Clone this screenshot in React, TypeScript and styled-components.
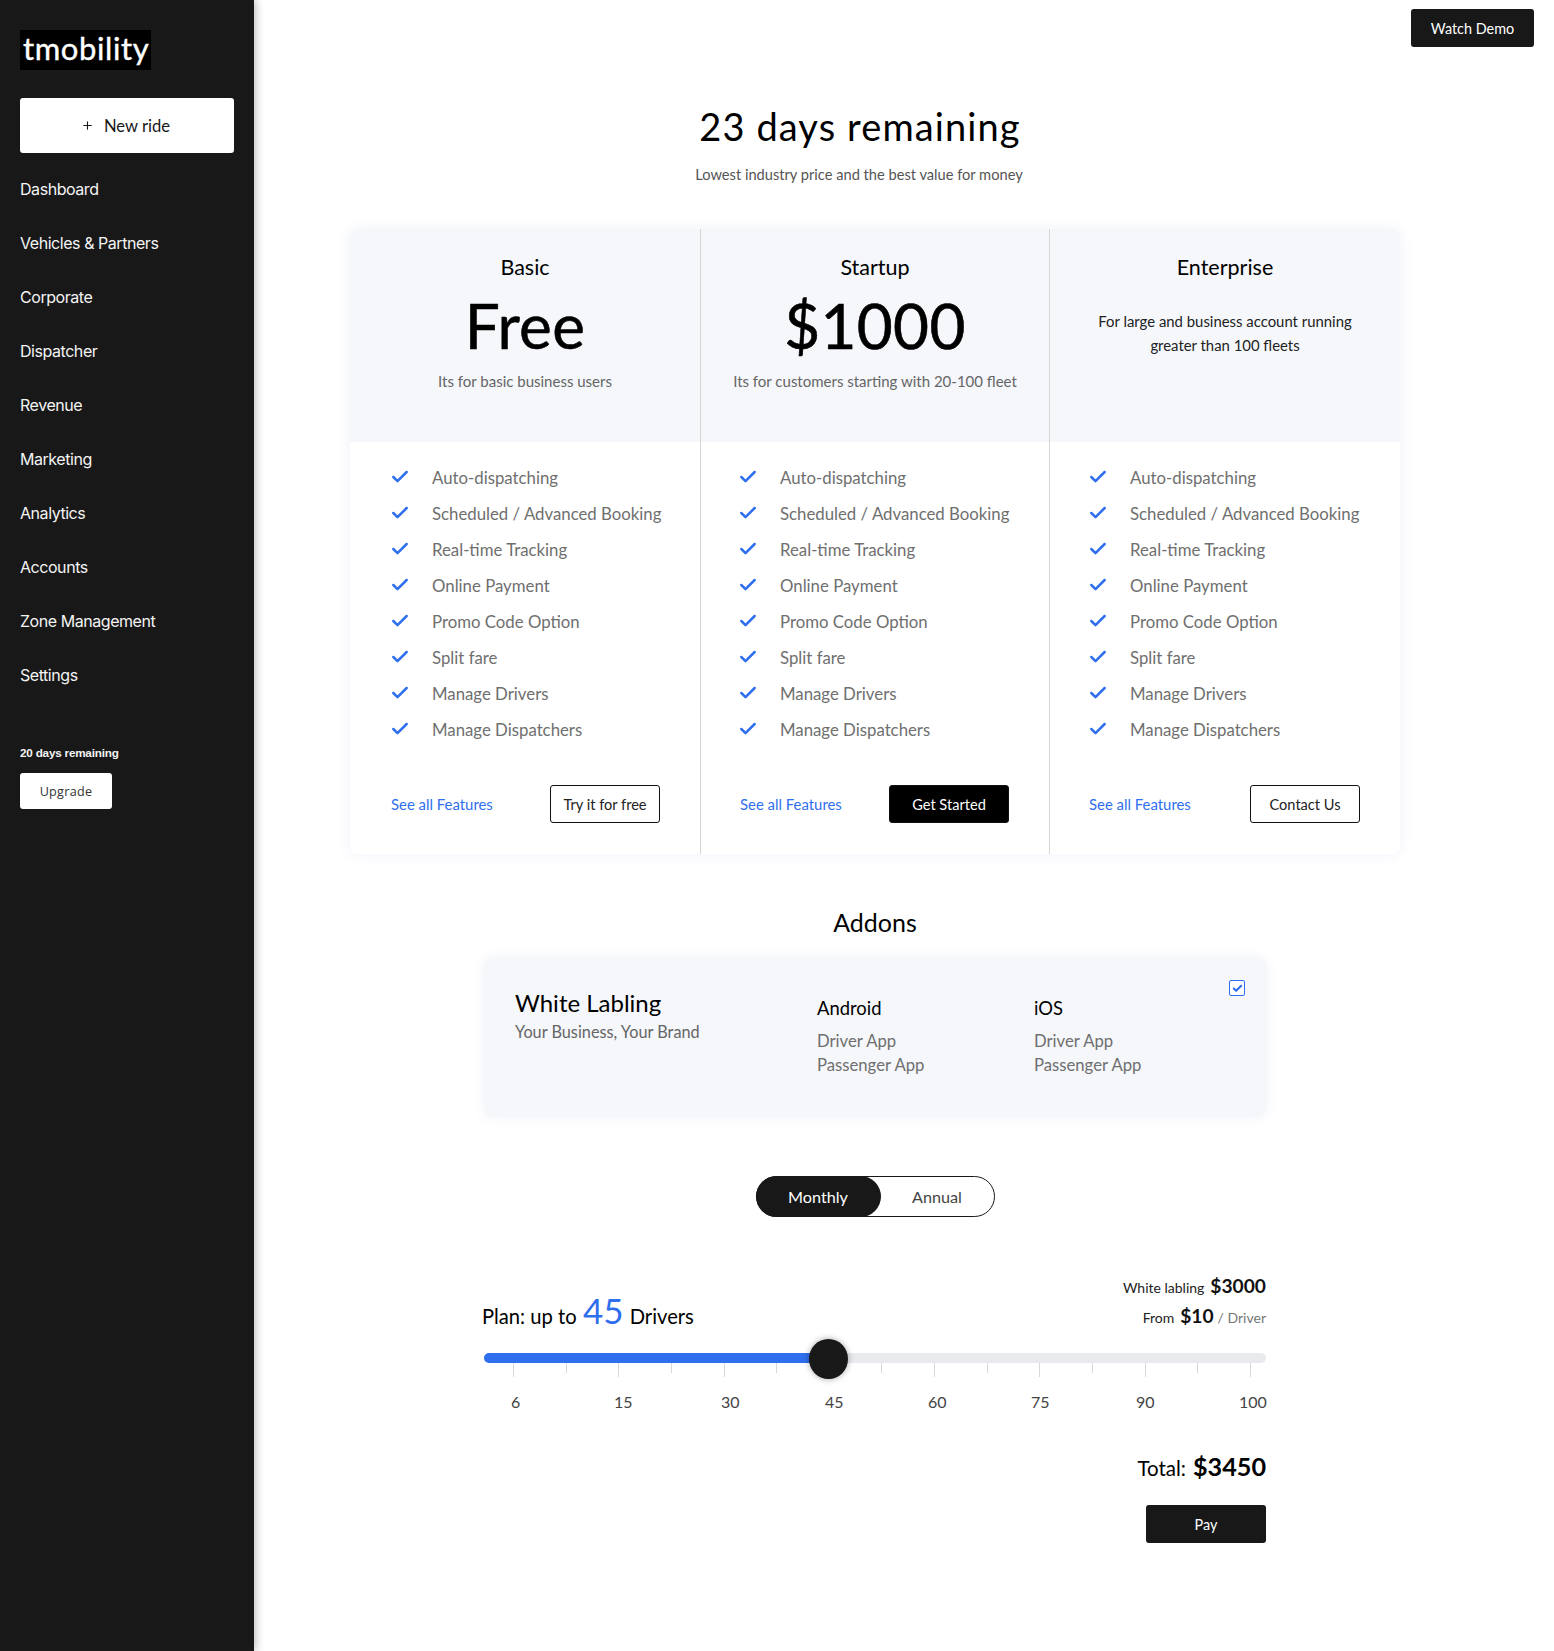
import React from 'react';
import styled, { createGlobalStyle } from 'styled-components';
import { Check, Plus } from 'lucide-react';

const GlobalStyle = createGlobalStyle`
  html, body { margin: 0; padding: 0; background: #fff; }
  body { font-family: 'Lato', 'Liberation Sans', sans-serif; color: #000; }
  * { box-sizing: border-box; }
`;

const Page = styled.div`
  display: flex;
  width: 1554px;
  min-height: 1651px;
`;

const Sidebar = styled.aside`
  width: 254px;
  flex-shrink: 0;
  background: #181818;
  box-shadow: 2px 0 8px rgba(0, 0, 0, 0.25);
  padding: 30px 20px 0;
  font-family: 'Inter', sans-serif;
`;

const Logo = styled.div`
  display: inline-block;
  height: 40px;
  width: 131px;
  background: #000;
  color: #fff;
  font-family: 'Lato', sans-serif;
  font-size: 31px;
  line-height: 36px;
  padding-left: 3px;
  letter-spacing: 0.6px;
  -webkit-text-stroke: 0.4px #fff;
`;

const NewRide = styled.button`
  display: flex;
  align-items: center;
  justify-content: center;
  gap: 10px;
  width: 214px;
  height: 55px;
  margin: 28px 0 9px;
  padding: 0 3px 0 0;
  border: none;
  border-radius: 3px;
  background: #fff;
  color: #181818;
  font-family: 'Lato', sans-serif;
  font-size: 16.6px;
`;

const NavList = styled.nav`
  display: flex;
  flex-direction: column;
`;

const NavItem = styled.a`
  height: 54px;
  line-height: 54px;
  color: #f4f4f4;
  font-size: 16px;
  letter-spacing: -0.45px;
`;

const Remaining = styled.div`
  margin-top: 43px;
  color: #f4f4f4;
  font-family: 'Liberation Sans', sans-serif;
  font-weight: 700;
  font-size: 11.7px;
  line-height: 16px;
  letter-spacing: -0.2px;
`;

const Upgrade = styled.button`
  display: block;
  width: 92px;
  height: 36px;
  margin-top: 12px;
  border: none;
  border-radius: 3px;
  background: #fff;
  color: #333;
  font-family: 'Open Sans', sans-serif;
  font-size: 12.6px;
  letter-spacing: 0.3px;
`;

const Main = styled.main`
  flex: 1;
  display: flex;
  flex-direction: column;
  padding: 9px 20px 0 96px;
`;

const TopBar = styled.div`
  display: flex;
  justify-content: flex-end;
`;

const DarkButton = styled.button<{ $w: number; $h?: number }>`
  width: ${p => p.$w}px;
  height: ${p => p.$h ?? 38}px;
  border: none;
  border-radius: 3px;
  background: #181818;
  color: #fff;
  font-family: 'Lato', sans-serif;
  font-size: 14.4px;
`;

const Content = styled.div`
  width: 1050px;
  display: flex;
  flex-direction: column;
`;

const Title = styled.h1`
  margin: 56px 30px 0 0;
  text-align: center;
  font-weight: 400;
  font-size: 38px;
  line-height: 46px;
  letter-spacing: 1.1px;
`;

const Subtitle = styled.p`
  margin: 16px 32px 0 0;
  text-align: center;
  font-size: 14.65px;
  line-height: 20px;
  color: #555;
`;

const Plans = styled.section`
  display: grid;
  grid-template-columns: 350px 349px 351px;
  height: 625px;
  margin-top: 44px;
  border-radius: 8px;
  overflow: hidden;
  box-shadow: 0 0 14px rgba(60, 90, 200, 0.08);
`;

const Plan = styled.div`
  display: flex;
  flex-direction: column;
  & + & { border-left: 1px solid #d6d6d6; }
`;

const PlanHead = styled.div`
  height: 213px;
  background: #f5f7fb;
  display: flex;
  flex-direction: column;
  align-items: center;
  padding-top: 26px;
`;

const PlanName = styled.div`
  font-size: 21.5px;
  line-height: 24px;
`;

const PlanPrice = styled.div`
  margin-top: 12px;
  font-size: 62px;
  line-height: 68px;
  letter-spacing: 0.3px;
  -webkit-text-stroke: 0.6px #000;
`;

const PlanNote = styled.div`
  margin-top: 12px;
  font-size: 15px;
  line-height: 20px;
  color: #666;
`;

const PlanLead = styled.div`
  width: 270px;
  margin-top: 30px;
  text-align: center;
  font-size: 14.9px;
  line-height: 24px;
  color: #222;
`;

const Features = styled.ul<{ $inset: number }>`
  list-style: none;
  margin: 0;
  padding: 17px 0 0 ${p => p.$inset}px;
  flex: 1;
`;

const Feature = styled.li`
  display: flex;
  align-items: center;
  gap: 22px;
  height: 36px;
  font-size: 16.8px;
  color: #6f6f6f;
`;

const PlanFoot = styled.div<{ $inset: number }>`
  display: flex;
  align-items: center;
  justify-content: space-between;
  padding: 0 40px 31px ${p => p.$inset}px;
`;

const SeeAll = styled.a`
  color: #2f6fed;
  font-size: 14.9px;
`;

const PlanButton = styled.button<{ $solid?: boolean; $w: number }>`
  width: ${p => p.$w}px;
  height: 38px;
  border: 1px solid #111;
  border-radius: 3px;
  background: ${p => (p.$solid ? '#000' : '#fff')};
  color: ${p => (p.$solid ? '#fff' : '#222')};
  font-family: 'Lato', sans-serif;
  font-size: 14.6px;
`;

const AddonsTitle = styled.h2`
  margin: 51px 0 0;
  text-align: center;
  font-weight: 400;
  font-size: 25px;
  line-height: 34px;
`;

const Narrow = styled.div`
  width: 782px;
  align-self: center;
  display: flex;
  flex-direction: column;
`;

const AddonCard = styled.div`
  position: relative;
  display: grid;
  grid-template-columns: 302px 217px 1fr;
  height: 159px;
  margin-top: 19px;
  padding: 30px 0 0 31px;
  background: #f5f7fb;
  border-radius: 8px;
  box-shadow: 0 0 12px rgba(60, 90, 200, 0.08);
`;

const AddonName = styled.div`
  font-size: 24px;
  line-height: 30px;
`;

const AddonTag = styled.div`
  margin-top: 2px;
  font-size: 16.3px;
  line-height: 24px;
  color: #666;
`;

const PlatformName = styled.div`
  margin-top: 6px;
  font-size: 18.4px;
  line-height: 28px;
`;

const PlatformApp = styled.div`
  font-size: 16.7px;
  line-height: 24px;
  color: #6f6f6f;
`;

const PlatformApps = styled.div`
  margin-top: 7px;
`;

const Checkbox = styled.span`
  position: absolute;
  top: 22px;
  right: 21px;
  width: 16px;
  height: 16px;
  display: flex;
  align-items: center;
  justify-content: center;
  border: 1px solid #2f6fed;
  border-radius: 2px;
  background: #fff;
  color: #2f6fed;
`;

const Toggle = styled.div`
  display: flex;
  align-self: center;
  width: 239px;
  height: 41px;
  margin-top: 59px;
  border: 1px solid #181818;
  border-radius: 21px;
`;

const ToggleOption = styled.div<{ $active?: boolean }>`
  flex: ${p => (p.$active ? '0 0 125px' : '1')};
  margin: ${p => (p.$active ? '-1px 0 -1px -1px' : '0')};
  display: flex;
  align-items: center;
  justify-content: center;
  border-radius: 21px;
  background: ${p => (p.$active ? '#181818' : 'transparent')};
  color: ${p => (p.$active ? '#fff' : '#444')};
  font-size: 16.2px;
`;

const PlanRow = styled.div`
  display: flex;
  justify-content: space-between;
  align-items: flex-end;
  margin-top: 56px;
`;

const PlanLabel = styled.div`
  margin-left: -2px;
  font-size: 20.2px;
  line-height: 44px;
  white-space: nowrap;
`;

const PlanCount = styled.span`
  color: #2f6fed;
  font-size: 35px;
  margin: 0 1px;
`;

const Prices = styled.div`
  display: flex;
  flex-direction: column;
  align-items: flex-end;
  padding-bottom: 6px;
`;

const PriceLine = styled.div`
  font-size: 14px;
  line-height: 29.5px;
  color: #222;
`;

const PriceValue = styled.strong`
  margin-left: 6px;
  font-size: 19.2px;
  line-height: 1;
  font-weight: 700;
  color: #111;
`;

const PriceUnit = styled.span`
  margin-left: 4px;
  color: #777;
`;

const Track = styled.div`
  position: relative;
  height: 10px;
  margin-top: 15px;
  border-radius: 5px;
  background: #e9eaee;
`;

const TrackFill = styled.div`
  height: 100%;
  border-radius: 5px 0 0 5px;
  background: #2f6fed;
`;

const Thumb = styled.div`
  position: absolute;
  top: -14px;
  width: 39px;
  height: 40px;
  margin-left: -19px;
  border-radius: 50%;
  background: #181818;
  box-shadow: 0 0 6px rgba(0, 0, 0, 0.35);
`;

const Ticks = styled.div`
  display: flex;
  justify-content: space-between;
  padding: 0 15px 0 29px;
  height: 14px;
  align-items: flex-start;
`;

const Tick = styled.span<{ $long: boolean }>`
  width: 1px;
  height: ${p => (p.$long ? 14 : 10)}px;
  background: #d9d9d9;
`;

const Scale = styled.div`
  display: grid;
  grid-template-columns: 103px 107px 104px 103px 103px 105px 103px 1fr;
  padding-left: 27px;
  margin-top: 13px;
  font-size: 16px;
  line-height: 24px;
  color: #444;
`;

const Total = styled.div`
  display: flex;
  align-items: baseline;
  justify-content: flex-end;
  gap: 7px;
  margin-top: 37px;
  font-size: 20.5px;
  line-height: 30px;
`;

const TotalValue = styled.strong`
  font-size: 25.2px;
  font-weight: 700;
`;

const PayRow = styled.div`
  display: flex;
  justify-content: flex-end;
  margin-top: 22px;
`;

const navItems = [
  'Dashboard',
  'Vehicles & Partners',
  'Corporate',
  'Dispatcher',
  'Revenue',
  'Marketing',
  'Analytics',
  'Accounts',
  'Zone Management',
  'Settings',
];

const features = [
  'Auto-dispatching',
  'Scheduled / Advanced Booking',
  'Real-time Tracking',
  'Online Payment',
  'Promo Code Option',
  'Split fare',
  'Manage Drivers',
  'Manage Dispatchers',
];

const plans = [
  { name: 'Basic', price: 'Free', note: 'Its for basic business users', cta: 'Try it for free', w: 110, inset: 40, footInset: 41 },
  { name: 'Startup', price: '$1000', note: 'Its for customers starting with 20-100 fleet', cta: 'Get Started', w: 120, solid: true, inset: 37, footInset: 39 },
  { name: 'Enterprise', lead: 'For large and business account running greater than 100 fleets', cta: 'Contact Us', w: 110, inset: 38, footInset: 39 },
];

const platforms = ['Android', 'iOS'];
const scale = [6, 15, 30, 45, 60, 75, 90, 100];
const ticks = Array.from({ length: 15 }, (_, i) => i);
const sliderPercent = 44;

export default function App() {
  return (
    <Page>
      <GlobalStyle />
      <Sidebar>
        <Logo>tmobility</Logo>
        <NewRide>
          <Plus size={13} strokeWidth={2} />
          New ride
        </NewRide>
        <NavList>
          {navItems.map(item => (
            <NavItem key={item}>{item}</NavItem>
          ))}
        </NavList>
        <Remaining>20 days remaining</Remaining>
        <Upgrade>Upgrade</Upgrade>
      </Sidebar>
      <Main>
        <TopBar>
          <DarkButton $w={123}>Watch Demo</DarkButton>
        </TopBar>
        <Content>
          <Title>23 days remaining</Title>
          <Subtitle>Lowest industry price and the best value for money</Subtitle>
          <Plans>
            {plans.map(plan => (
              <Plan key={plan.name}>
                <PlanHead>
                  <PlanName>{plan.name}</PlanName>
                  {plan.price && <PlanPrice>{plan.price}</PlanPrice>}
                  {plan.note && <PlanNote>{plan.note}</PlanNote>}
                  {plan.lead && <PlanLead>{plan.lead}</PlanLead>}
                </PlanHead>
                <Features $inset={plan.inset}>
                  {features.map(feature => (
                    <Feature key={feature}>
                      <Check size={20} strokeWidth={3} color="#2f6fed" />
                      {feature}
                    </Feature>
                  ))}
                </Features>
                <PlanFoot $inset={plan.footInset}>
                  <SeeAll>See all Features</SeeAll>
                  <PlanButton $w={plan.w} $solid={plan.solid}>{plan.cta}</PlanButton>
                </PlanFoot>
              </Plan>
            ))}
          </Plans>
          <AddonsTitle>Addons</AddonsTitle>
          <Narrow>
            <AddonCard>
              <div>
                <AddonName>White Labling</AddonName>
                <AddonTag>Your Business, Your Brand</AddonTag>
              </div>
              {platforms.map(platform => (
                <div key={platform}>
                  <PlatformName>{platform}</PlatformName>
                  <PlatformApps>
                    <PlatformApp>Driver App</PlatformApp>
                    <PlatformApp>Passenger App</PlatformApp>
                  </PlatformApps>
                </div>
              ))}
              <Checkbox>
                <Check size={11} strokeWidth={4.5} />
              </Checkbox>
            </AddonCard>
            <Toggle>
              <ToggleOption $active>Monthly</ToggleOption>
              <ToggleOption>Annual</ToggleOption>
            </Toggle>
            <PlanRow>
              <PlanLabel>
                Plan: up to <PlanCount>45</PlanCount> Drivers
              </PlanLabel>
              <Prices>
                <PriceLine>
                  White labling<PriceValue>$3000</PriceValue>
                </PriceLine>
                <PriceLine>
                  From<PriceValue>$10</PriceValue>
                  <PriceUnit>/ Driver</PriceUnit>
                </PriceLine>
              </Prices>
            </PlanRow>
            <Track>
              <TrackFill style={{ width: `${sliderPercent}%` }} />
              <Thumb style={{ left: `${sliderPercent}%` }} />
            </Track>
            <Ticks>
              {ticks.map(i => (
                <Tick key={i} $long={i % 2 === 0} />
              ))}
            </Ticks>
            <Scale>
              {scale.map(value => (
                <span key={value}>{value}</span>
              ))}
            </Scale>
            <Total>
              Total: <TotalValue>$3450</TotalValue>
            </Total>
            <PayRow>
              <DarkButton $w={120}>Pay</DarkButton>
            </PayRow>
          </Narrow>
        </Content>
      </Main>
    </Page>
  );
}
